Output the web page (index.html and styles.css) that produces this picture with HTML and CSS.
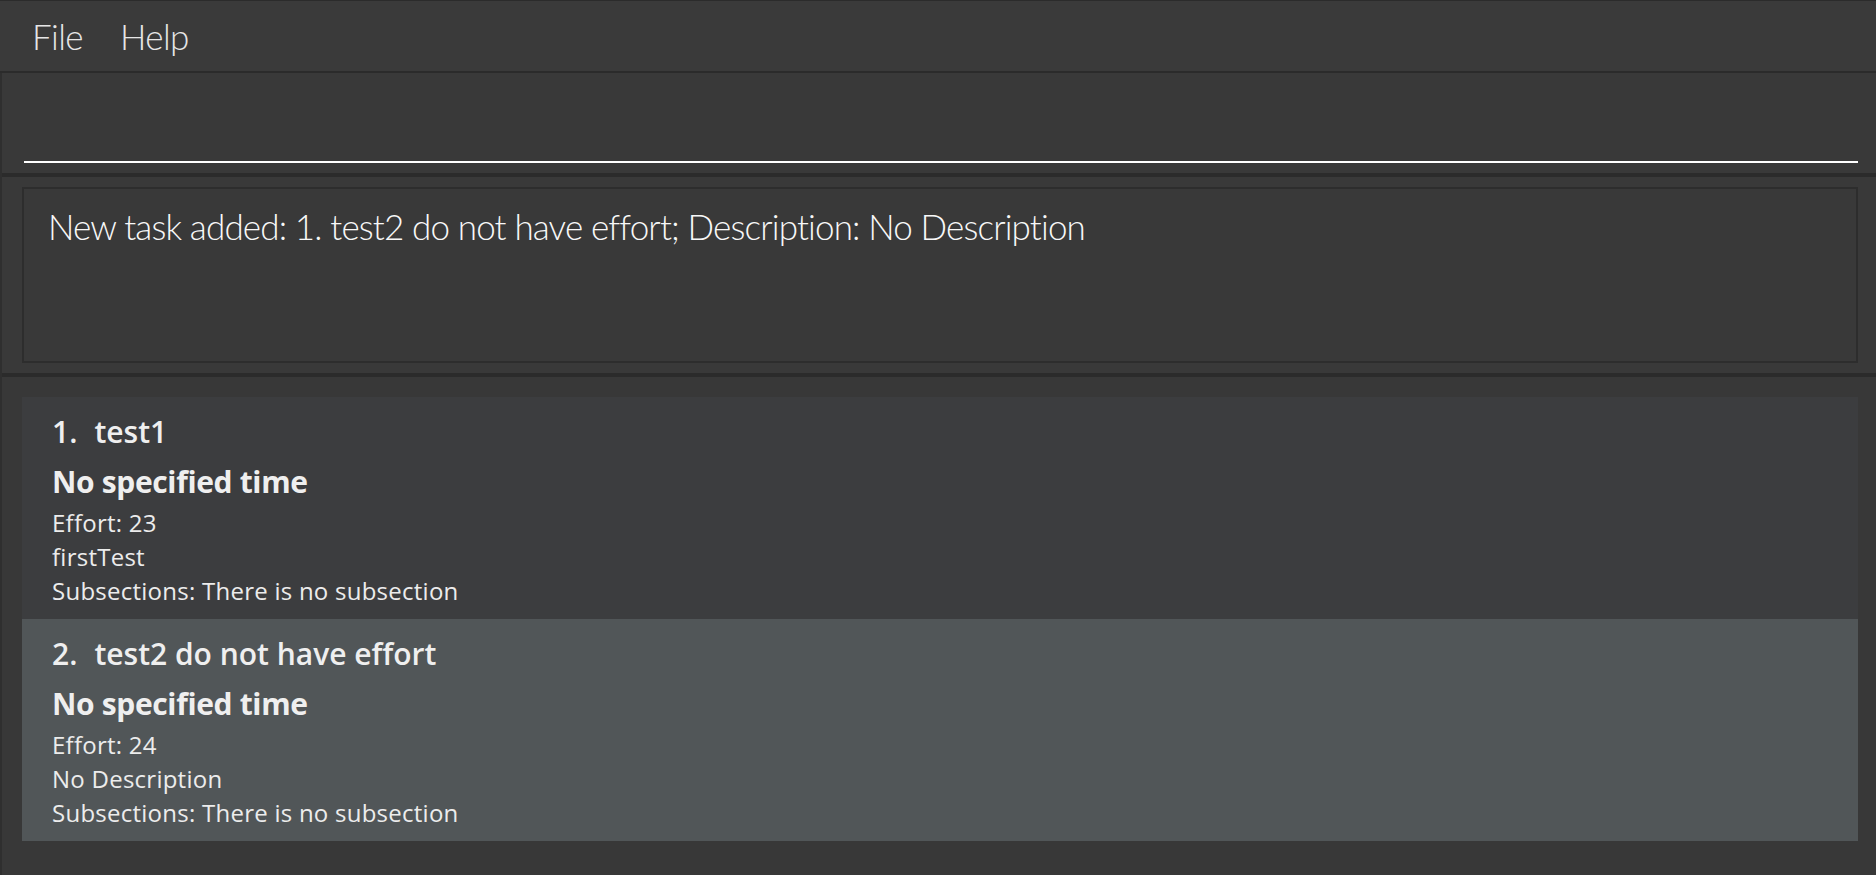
FILE: index.html
```html
<!DOCTYPE html>
<html lang="en">
<head>
<meta charset="utf-8">
<title>Task Manager</title>
<link rel="stylesheet" href="styles.css">
</head>
<body>
<div class="app">
  <nav class="menubar">
    <span class="menu-item">File</span>
    <span class="menu-item">Help</span>
  </nav>
  <main class="content">
    <section class="command-pane">
      <input class="command-input" type="text" aria-label="Command">
    </section>
    <section class="result-pane">
      <div class="result-box">New task added: 1. test2 do not have effort; Description: No Description</div>
    </section>
    <section class="list-pane">
      <ul class="task-list">
        <li class="task-card even">
          <div class="task-title"><span class="task-id">1.</span><span class="task-name">test1</span></div>
          <div class="task-time">No specified time</div>
          <div class="task-line">Effort: 23</div>
          <div class="task-line">firstTest</div>
          <div class="task-line">Subsections: There is no subsection</div>
        </li>
        <li class="task-card odd">
          <div class="task-title"><span class="task-id">2.</span><span class="task-name">test2 do not have effort</span></div>
          <div class="task-time">No specified time</div>
          <div class="task-line">Effort: 24</div>
          <div class="task-line">No Description</div>
          <div class="task-line">Subsections: There is no subsection</div>
        </li>
      </ul>
    </section>
  </main>
</div>
</body>
</html>
```

FILE: styles.css
```css
* { box-sizing: border-box; }
html, body {
  margin: 0;
  padding: 0;
  height: 100%;
  background: #383838;
  font-family: "Open Sans", "Noto Sans", sans-serif;
  overflow: hidden;
}
.app {
  display: flex;
  flex-direction: column;
  height: 875px;
  border-top: 1px solid #2b2b2b;
}
.menubar {
  display: flex;
  align-items: center;
  height: 72px;
  flex: none;
  padding: 0 0 0 32px;
  gap: 37px;
  background: #3a3a3a;
  border-bottom: 2px solid #2b2b2b;
}
.menu-item {
  font-family: "Lato", "Open Sans", sans-serif;
  font-size: 35px;
  font-weight: 300;
  line-height: 70px;
  letter-spacing: -0.6px;
  color: #e6e6e6;
}
.content {
  flex: 1;
  display: flex;
  flex-direction: column;
  border-left: 2px solid #2f2f2f;
  min-height: 0;
}
.command-pane {
  flex: none;
  height: 104px;
  display: flex;
  align-items: flex-end;
  padding: 0 18px 10px 22px;
  background: #393939;
  border-bottom: 4px solid #2b2b2b;
}
.command-input {
  display: block;
  width: 100%;
  height: 40px;
  background: transparent;
  border: none;
  border-bottom: 2px solid #ffffff;
  outline: none;
  color: #ffffff;
  font-family: inherit;
  font-size: 24px;
  padding: 0;
}
.result-pane {
  flex: none;
  height: 200px;
  padding: 10px 18px 10px 20px;
  background: #393939;
  border-bottom: 4px solid #2b2b2b;
}
.result-box {
  height: 176px;
  border: 2px solid #2d2d2d;
  padding: 13px 24px;
  font-family: "Lato", "Open Sans", sans-serif;
  font-size: 35px;
  font-weight: 300;
  line-height: 48px;
  letter-spacing: -0.85px;
  font-variant-ligatures: none;
  color: #f8f8f8;
}
.list-pane {
  flex: 1;
  padding: 20px 18px 0 20px;
  background: #383838;
}
.task-list {
  list-style: none;
  margin: 0;
  padding: 0;
}
.task-card {
  height: 222px;
  padding: 15px 28px 0 30px;
  color: #ececec;
}
.task-card.even { background: #3c3d3f; }
.task-card.odd { background: #515658; }
.task-title {
  font-size: 30px;
  font-weight: 600;
  line-height: 40px;
  color: #efefef;
}
.task-id { margin-right: 17px; }
.task-time {
  margin-top: 10px;
  font-size: 30px;
  font-weight: 700;
  line-height: 40px;
  letter-spacing: -0.35px;
  color: #efefef;
}
.task-line {
  font-size: 24px;
  font-weight: 400;
  line-height: 34px;
  letter-spacing: 0.25px;
}
.task-time + .task-line { margin-top: 4px; }
```
